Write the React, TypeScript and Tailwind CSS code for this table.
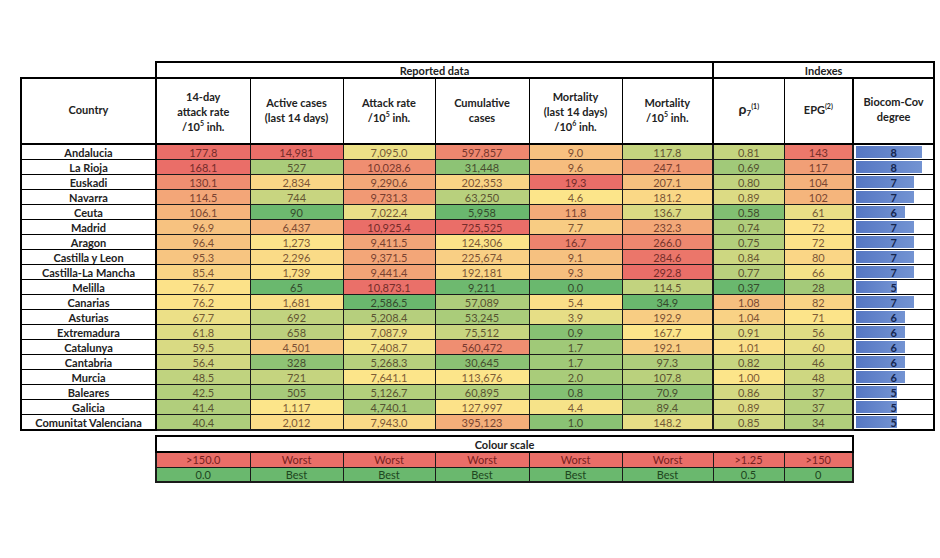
import React from "react";

// row data as printed in the sheet
const rows: [string, string[], number][] = [
  ["Andalucia", ["177.8", "14,981", "7,095.0", "597,857", "9.0", "117.8", "0.81", "143"], 8],
  ["La Rioja", ["168.1", "527", "10,028.6", "31,448", "9.6", "247.1", "0.69", "117"], 8],
  ["Euskadi", ["130.1", "2,834", "9,290.6", "202,353", "19.3", "207.1", "0.80", "104"], 7],
  ["Navarra", ["114.5", "744", "9,731.3", "63,250", "4.6", "181.2", "0.89", "102"], 7],
  ["Ceuta", ["106.1", "90", "7,022.4", "5,958", "11.8", "136.7", "0.58", "61"], 6],
  ["Madrid", ["96.9", "6,437", "10,925.4", "725,525", "7.7", "232.3", "0.74", "72"], 7],
  ["Aragon", ["96.4", "1,273", "9,411.5", "124,306", "16.7", "266.0", "0.75", "72"], 7],
  ["Castilla y Leon", ["95.3", "2,296", "9,371.5", "225,674", "9.1", "284.6", "0.84", "80"], 7],
  ["Castilla-La Mancha", ["85.4", "1,739", "9,441.4", "192,181", "9.3", "292.8", "0.77", "66"], 7],
  ["Melilla", ["76.7", "65", "10,873.1", "9,211", "0.0", "114.5", "0.37", "28"], 5],
  ["Canarias", ["76.2", "1,681", "2,586.5", "57,089", "5.4", "34.9", "1.08", "82"], 7],
  ["Asturias", ["67.7", "692", "5,208.4", "53,245", "3.9", "192.9", "1.04", "71"], 6],
  ["Extremadura", ["61.8", "658", "7,087.9", "75,512", "0.9", "167.7", "0.91", "56"], 6],
  ["Catalunya", ["59.5", "4,501", "7,408.7", "560,472", "1.7", "192.1", "1.01", "60"], 6],
  ["Cantabria", ["56.4", "328", "5,268.3", "30,645", "1.7", "97.3", "0.82", "46"], 6],
  ["Murcia", ["48.5", "721", "7,641.1", "113,676", "2.0", "107.8", "1.00", "48"], 6],
  ["Baleares", ["42.5", "505", "5,126.7", "60,895", "0.8", "70.9", "0.86", "37"], 5],
  ["Galicia", ["41.4", "1,117", "4,740.1", "127,997", "4.4", "89.4", "0.89", "37"], 5],
  ["Comunitat Valenciana", ["40.4", "2,012", "7,943.0", "395,123", "1.0", "148.2", "0.85", "34"], 5],
];

// min / mid / max for each colour scale column
const scales: [number, number, number][] = [
  [10, 75, 150],
  [65, 1117, 14981],
  [2586.5, 7641.1, 10925.4],
  [5958, 113676, 725525],
  [0, 4.6, 19.3],
  [34.9, 167.7, 292.8],
  [0.5, 1.0, 1.25],
  [0, 70, 150],
];

const GREEN = [106, 184, 110];
const YELLOW = [252, 229, 138];
const RED = [234, 110, 104];

const clamp = (t: number) => Math.max(0, Math.min(1, t));
const mix = (a: number[], b: number[], t: number) => a.map((v, i) => Math.round(v + (b[i] - v) * t));

function cellColour(x: number, [min, mid, max]: [number, number, number]) {
  const c = x <= mid ? mix(GREEN, YELLOW, clamp((x - min) / (mid - min))) : mix(YELLOW, RED, clamp((x - mid) / (max - mid)));
  const t = c.map((v, i) => Math.round(v * (i === 0 ? 0.5 : 0.4)));
  return { backgroundColor: `rgb(${c.join(",")})`, color: `rgb(${t.join(",")})` };
}

const legendRed = { backgroundColor: `rgb(${RED.join(",")})`, color: "rgb(120,32,30)" };
const legendGreen = { backgroundColor: `rgb(${GREEN.join(",")})`, color: "rgb(30,70,32)" };

function Sup({ children }: { children: React.ReactNode }) {
  return <span className="text-[7px] relative -top-[5px] leading-none">{children}</span>;
}

export default function App() {
  return (
    <div className="w-[940px] h-[558px] bg-white pl-[20px] pt-[61px] font-['Lato','Liberation_Sans',sans-serif] text-[11px] text-[#222]">
      <table className="table-fixed w-[913px]">
        <colgroup>
          <col className="w-[135px]" />
          <col className="w-[94px]" />
          <col className="w-[93px]" />
          <col className="w-[92px]" />
          <col className="w-[94px]" />
          <col className="w-[93px]" />
          <col className="w-[91px]" />
          <col className="w-[71px]" />
          <col className="w-[69px]" />
          <col className="w-[81px]" />
        </colgroup>
        <thead>
          <tr className="h-[16px]">
            <td className="p-0" />
            <th colSpan={6} className="border-2 border-black p-0 font-bold leading-[13px]">
              Reported data
            </th>
            <th colSpan={3} className="border-2 border-black p-0 font-bold leading-[13px]">
              Indexes
            </th>
          </tr>
          <tr className="h-[66px] font-bold leading-[15px]">
            <th className="border-2 border-black p-0 pb-[3px]">Country</th>
            <th className="border-2 border-l-2 border-r border-black p-0">
              14-day
              <br />
              attack rate
              <br />
              /10<Sup>5</Sup> inh.
            </th>
            <th className="border-y-2 border-x border-black p-0 pb-[3px]">
              Active cases
              <br />
              (last 14 days)
            </th>
            <th className="border-y-2 border-x border-black p-0 pb-[3px]">
              Attack rate
              <br />
              /10<Sup>5</Sup> inh.
            </th>
            <th className="border-y-2 border-x border-black p-0 pb-[3px]">
              Cumulative
              <br />
              cases
            </th>
            <th className="border-y-2 border-x border-black p-0">
              Mortality
              <br />
              (last 14 days)
              <br />
              /10<Sup>6</Sup> inh.
            </th>
            <th className="border-y-2 border-l border-r-2 border-black p-0 pb-[3px]">
              Mortality
              <br />
              /10<Sup>5</Sup> inh.
            </th>
            <th className="border-y-2 border-x border-black p-0 pb-[3px]">
              <span className="text-[14px]">ρ</span>
              <span className="text-[8px] relative top-[2px]">7</span>
              <Sup>(1)</Sup>
            </th>
            <th className="border-y-2 border-l border-r-2 border-black p-0 pb-[3px]">
              EPG<Sup>(2)</Sup>
            </th>
            <th className="border-2 border-black p-0 pb-[5px]">
              Biocom-Cov
              <br />
              degree
            </th>
          </tr>
        </thead>
        <tbody>
          {rows.map(([name, vals, bio], r) => (
            <tr key={name} className="h-[15px] leading-[13px]">
              <td className={`border-x-2 border-y border-black p-0 text-center font-bold ${r === rows.length - 1 ? "border-b-2" : ""}`}>
                {name}
              </td>
              {vals.map((v, c) => (
                <td
                  key={c}
                  className={`border border-[#1a1a1a] p-0 text-center ${c === 0 ? "border-l-2" : ""} ${c === 5 || c === 7 ? "border-r-2" : ""} ${r === rows.length - 1 ? "border-b-2" : ""}`}
                  style={cellColour(parseFloat(v.replace(/,/g, "")), scales[c])}
                >
                  {v}
                </td>
              ))}
              <td className={`border-y border-r-2 border-l-2 border-black p-0 bg-white ${r === rows.length - 1 ? "border-b-2" : ""}`}>
                <div className="grid h-[14px] items-center">
                  <div className="[grid-area:1/1] h-[12px] ml-[2px] bg-gradient-to-r from-[#5677c3] to-[#7393d2]" style={{ width: `${bio * 10.4}%` }} />
                  <div className="[grid-area:1/1] text-center font-bold text-[#16264f]">{bio}</div>
                </div>
              </td>
            </tr>
          ))}
        </tbody>
      </table>

      <table className="table-fixed w-[697px] ml-[135px] mt-[4px] leading-[13px]">
        <colgroup>
          <col className="w-[94px]" />
          <col className="w-[93px]" />
          <col className="w-[92px]" />
          <col className="w-[94px]" />
          <col className="w-[93px]" />
          <col className="w-[91px]" />
          <col className="w-[71px]" />
          <col className="w-[69px]" />
        </colgroup>
        <tbody>
          <tr className="h-[16px]">
            <th colSpan={8} className="border-2 border-black p-0 font-bold">
              Colour scale
            </th>
          </tr>
          <tr className="h-[15px]">
            {[">150.0", "Worst", "Worst", "Worst", "Worst", "Worst", ">1.25", ">150"].map((t, i) => (
              <td key={i} className={`border border-[#1a1a1a] p-0 text-center ${i === 0 ? "border-l-2" : ""} ${i === 7 ? "border-r-2" : ""}`} style={legendRed}>
                {t}
              </td>
            ))}
          </tr>
          <tr className="h-[15px]">
            {["0.0", "Best", "Best", "Best", "Best", "Best", "0.5", "0"].map((t, i) => (
              <td key={i} className={`border border-b-2 border-[#1a1a1a] p-0 text-center ${i === 0 ? "border-l-2" : ""} ${i === 7 ? "border-r-2" : ""}`} style={legendGreen}>
                {t}
              </td>
            ))}
          </tr>
        </tbody>
      </table>
    </div>
  );
}
